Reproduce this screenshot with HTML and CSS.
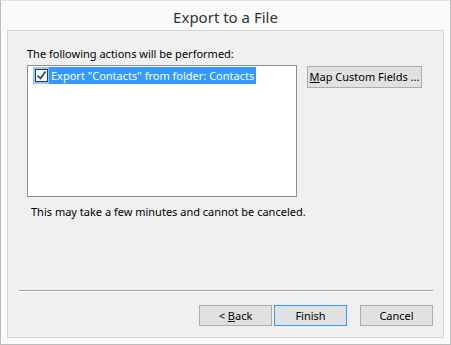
FILE: index.html
```html
<!DOCTYPE html>
<html>
<head>
    <title>Export to a File</title>
    <link rel="stylesheet" href="styles.css">
</head>
<body>

    <div class="window">
        <div class="title">Export to a File</div>

        <div class="panel">
            <div class="label">The following actions will be performed:</div>

            <div class="row">
                <div class="listbox">
                    <div class="item">
                        <span class="check-cell">
                            <span class="check">
                                <svg width="11" height="11" viewBox="0 0 11 11">
                                    <path d="M1.5 5.5 L4.5 8.5 L9.5 1.5" fill="none" stroke="#1e3d66" stroke-width="1.6"/>
                                </svg>
                            </span>
                        </span>
                        <span class="item-text">Export "Contacts" from folder: Contacts</span>
                    </div>
                </div>
                <button class="btn btn-map"><u>M</u>ap Custom Fields ...</button>
            </div>

            <div class="note">This may take a few minutes and cannot be canceled.</div>

            <div class="spacer"></div>
            <div class="separator"></div>

            <div class="buttons">
                <button class="btn">&lt; <u>B</u>ack</button>
                <button class="btn btn-default">Finish</button>
                <button class="btn btn-cancel">Cancel</button>
            </div>
        </div>
    </div>

</body>
</html>
```

FILE: styles.css
```css
* {
    box-sizing: border-box;
}
body {
    margin: 0;
    font-family: "Noto Sans", "Open Sans", sans-serif;
    font-size: 11px;
    color: #000;
    background: #fafafa;
}
.window {
    width: 451px;
    height: 345px;
    border: 1px solid #bcbcbc;
    border-top-color: #e3e3e3;
    background: #fafafa;
    display: flex;
    flex-direction: column;
}
.title {
    height: 29px;
    line-height: 32px;
    text-align: center;
    font-size: 15px;
    color: #333;
}
.panel {
    margin: 0 6px 0 6px;
    height: 308px;
    border: 1px solid #d4d4d4;
    background: #f0f0f0;
    display: flex;
    flex-direction: column;
    padding: 14px 10px 11px 19px;
}
.label {
    line-height: 15px;
    height: 20px;
    padding-top: 1px;
}
.row {
    display: flex;
    align-items: flex-start;
}
.listbox {
    width: 270px;
    height: 132px;
    border: 1px solid #8f8f8f;
    background: #fff;
    padding: 1px 5px;
}
.item {
    display: flex;
    height: 17px;
    line-height: 17px;
}
.check-cell {
    width: 16px;
    height: 17px;
    background: #99c9f2;
    display: flex;
    align-items: center;
    justify-content: center;
}
.check {
    width: 13px;
    height: 13px;
    border: 1px solid #1e3d66;
    background: #fff;
    display: flex;
    align-items: center;
    justify-content: center;
}
.item-text {
    background: #3399ff;
    color: #fff;
    padding: 0 2px 0 2px;
    white-space: nowrap;
}
.btn {
    font-family: inherit;
    font-size: 11px;
    color: #000;
    background: #e1e1e1;
    border: 1px solid #adadad;
    height: 21px;
    width: 73px;
    padding: 0;
    margin: 0;
    line-height: 18px;
    white-space: nowrap;
}
.btn-map {
    width: 115px;
    height: 22px;
    margin-left: 10px;
    margin-top: 1px;
}
.note {
    margin-top: 7px;
    padding-left: 4px;
    line-height: 16px;
}
.spacer {
    flex: 1;
}
.separator {
    height: 2px;
    border-top: 1px solid #a0a0a0;
    border-bottom: 1px solid #fcfcfc;
    margin-left: -8px;
}
.buttons {
    display: flex;
    justify-content: flex-end;
    margin-top: 13px;
    gap: 2px;
}
.btn-default {
    border-color: #3399ff;
}
.btn-cancel {
    margin-left: 11px;
}
```
